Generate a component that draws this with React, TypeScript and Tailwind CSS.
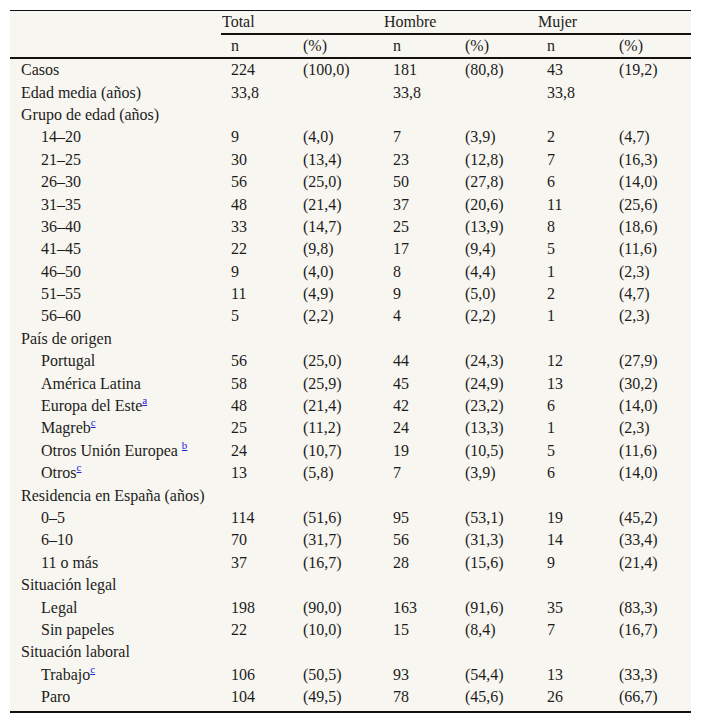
import React from "react"

type Fila = {
  label: string
  nota?: string
  espacio?: boolean
  sub?: boolean
  valores?: string[]
}

const filas: Fila[] = [
  { label: "Casos", valores: ["224", "(100,0)", "181", "(80,8)", "43", "(19,2)"] },
  { label: "Edad media (años)", valores: ["33,8", "", "33,8", "", "33,8", ""] },
  { label: "Grupo de edad (años)" },
  { label: "14–20", sub: true, valores: ["9", "(4,0)", "7", "(3,9)", "2", "(4,7)"] },
  { label: "21–25", sub: true, valores: ["30", "(13,4)", "23", "(12,8)", "7", "(16,3)"] },
  { label: "26–30", sub: true, valores: ["56", "(25,0)", "50", "(27,8)", "6", "(14,0)"] },
  { label: "31–35", sub: true, valores: ["48", "(21,4)", "37", "(20,6)", "11", "(25,6)"] },
  { label: "36–40", sub: true, valores: ["33", "(14,7)", "25", "(13,9)", "8", "(18,6)"] },
  { label: "41–45", sub: true, valores: ["22", "(9,8)", "17", "(9,4)", "5", "(11,6)"] },
  { label: "46–50", sub: true, valores: ["9", "(4,0)", "8", "(4,4)", "1", "(2,3)"] },
  { label: "51–55", sub: true, valores: ["11", "(4,9)", "9", "(5,0)", "2", "(4,7)"] },
  { label: "56–60", sub: true, valores: ["5", "(2,2)", "4", "(2,2)", "1", "(2,3)"] },
  { label: "País de origen" },
  { label: "Portugal", sub: true, valores: ["56", "(25,0)", "44", "(24,3)", "12", "(27,9)"] },
  { label: "América Latina", sub: true, valores: ["58", "(25,9)", "45", "(24,9)", "13", "(30,2)"] },
  { label: "Europa del Este", nota: "a", sub: true, valores: ["48", "(21,4)", "42", "(23,2)", "6", "(14,0)"] },
  { label: "Magreb", nota: "c", sub: true, valores: ["25", "(11,2)", "24", "(13,3)", "1", "(2,3)"] },
  { label: "Otros Unión Europea", nota: "b", espacio: true, sub: true, valores: ["24", "(10,7)", "19", "(10,5)", "5", "(11,6)"] },
  { label: "Otros", nota: "c", sub: true, valores: ["13", "(5,8)", "7", "(3,9)", "6", "(14,0)"] },
  { label: "Residencia en España (años)" },
  { label: "0–5", sub: true, valores: ["114", "(51,6)", "95", "(53,1)", "19", "(45,2)"] },
  { label: "6–10", sub: true, valores: ["70", "(31,7)", "56", "(31,3)", "14", "(33,4)"] },
  { label: "11 o más", sub: true, valores: ["37", "(16,7)", "28", "(15,6)", "9", "(21,4)"] },
  { label: "Situación legal" },
  { label: "Legal", sub: true, valores: ["198", "(90,0)", "163", "(91,6)", "35", "(83,3)"] },
  { label: "Sin papeles", sub: true, valores: ["22", "(10,0)", "15", "(8,4)", "7", "(16,7)"] },
  { label: "Situación laboral" },
  { label: "Trabajo", nota: "c", sub: true, valores: ["106", "(50,5)", "93", "(54,4)", "13", "(33,3)"] },
  { label: "Paro", sub: true, valores: ["104", "(49,5)", "78", "(45,6)", "26", "(66,7)"] },
]

const cols = "grid grid-cols-[211px_72px_90px_72px_82px_72px_82px]"

function Nota({ letra }: { letra: string }) {
  return <span className="relative top-[-7px] text-[11px] leading-none text-[#2020e0] underline">{letra}</span>
}

export default function App() {
  return (
    <div className="min-h-[725px] bg-white pt-[10px] pl-[10px] font-['Liberation_Serif','Times_New_Roman',serif]">
      <div className="w-[681px] border-t border-b-2 border-[#111] bg-[#f8f6f0] pb-[3px] font-['Liberation_Serif','Times_New_Roman',serif] text-[16px] text-[#1c1c1c]">
        {/* cabecera */}
        <div className={cols}>
          <div />
          {["Total", "Hombre", "Mujer"].map((g) => (
            <div key={g} className="col-span-2 flex h-[24px] items-center border-b-2 border-[#111] pl-px leading-none">
              {g}
            </div>
          ))}
        </div>
        <div className={`${cols} border-b-2 border-[#111]`}>
          <div />
          {["n", "(%)", "n", "(%)", "n", "(%)"].map((h, i) => (
            <div key={i} className="flex h-[22px] items-center pl-[10px] leading-none">
              {h}
            </div>
          ))}
        </div>
        {filas.map((f, i) => (
          <div key={i} className={`${cols} h-[22.4px] items-center leading-none`}>
            <div className={f.sub ? "pl-[31px]" : "pl-[11px]"}>
              {f.label}
              {f.nota && (
                <>
                  {f.espacio && " "}
                  <Nota letra={f.nota} />
                </>
              )}
            </div>
            {(f.valores ?? ["", "", "", "", "", ""]).map((v, j) => (
              <div key={j} className="pl-[10px]">
                {v}
              </div>
            ))}
          </div>
        ))}
      </div>
    </div>
  )
}
